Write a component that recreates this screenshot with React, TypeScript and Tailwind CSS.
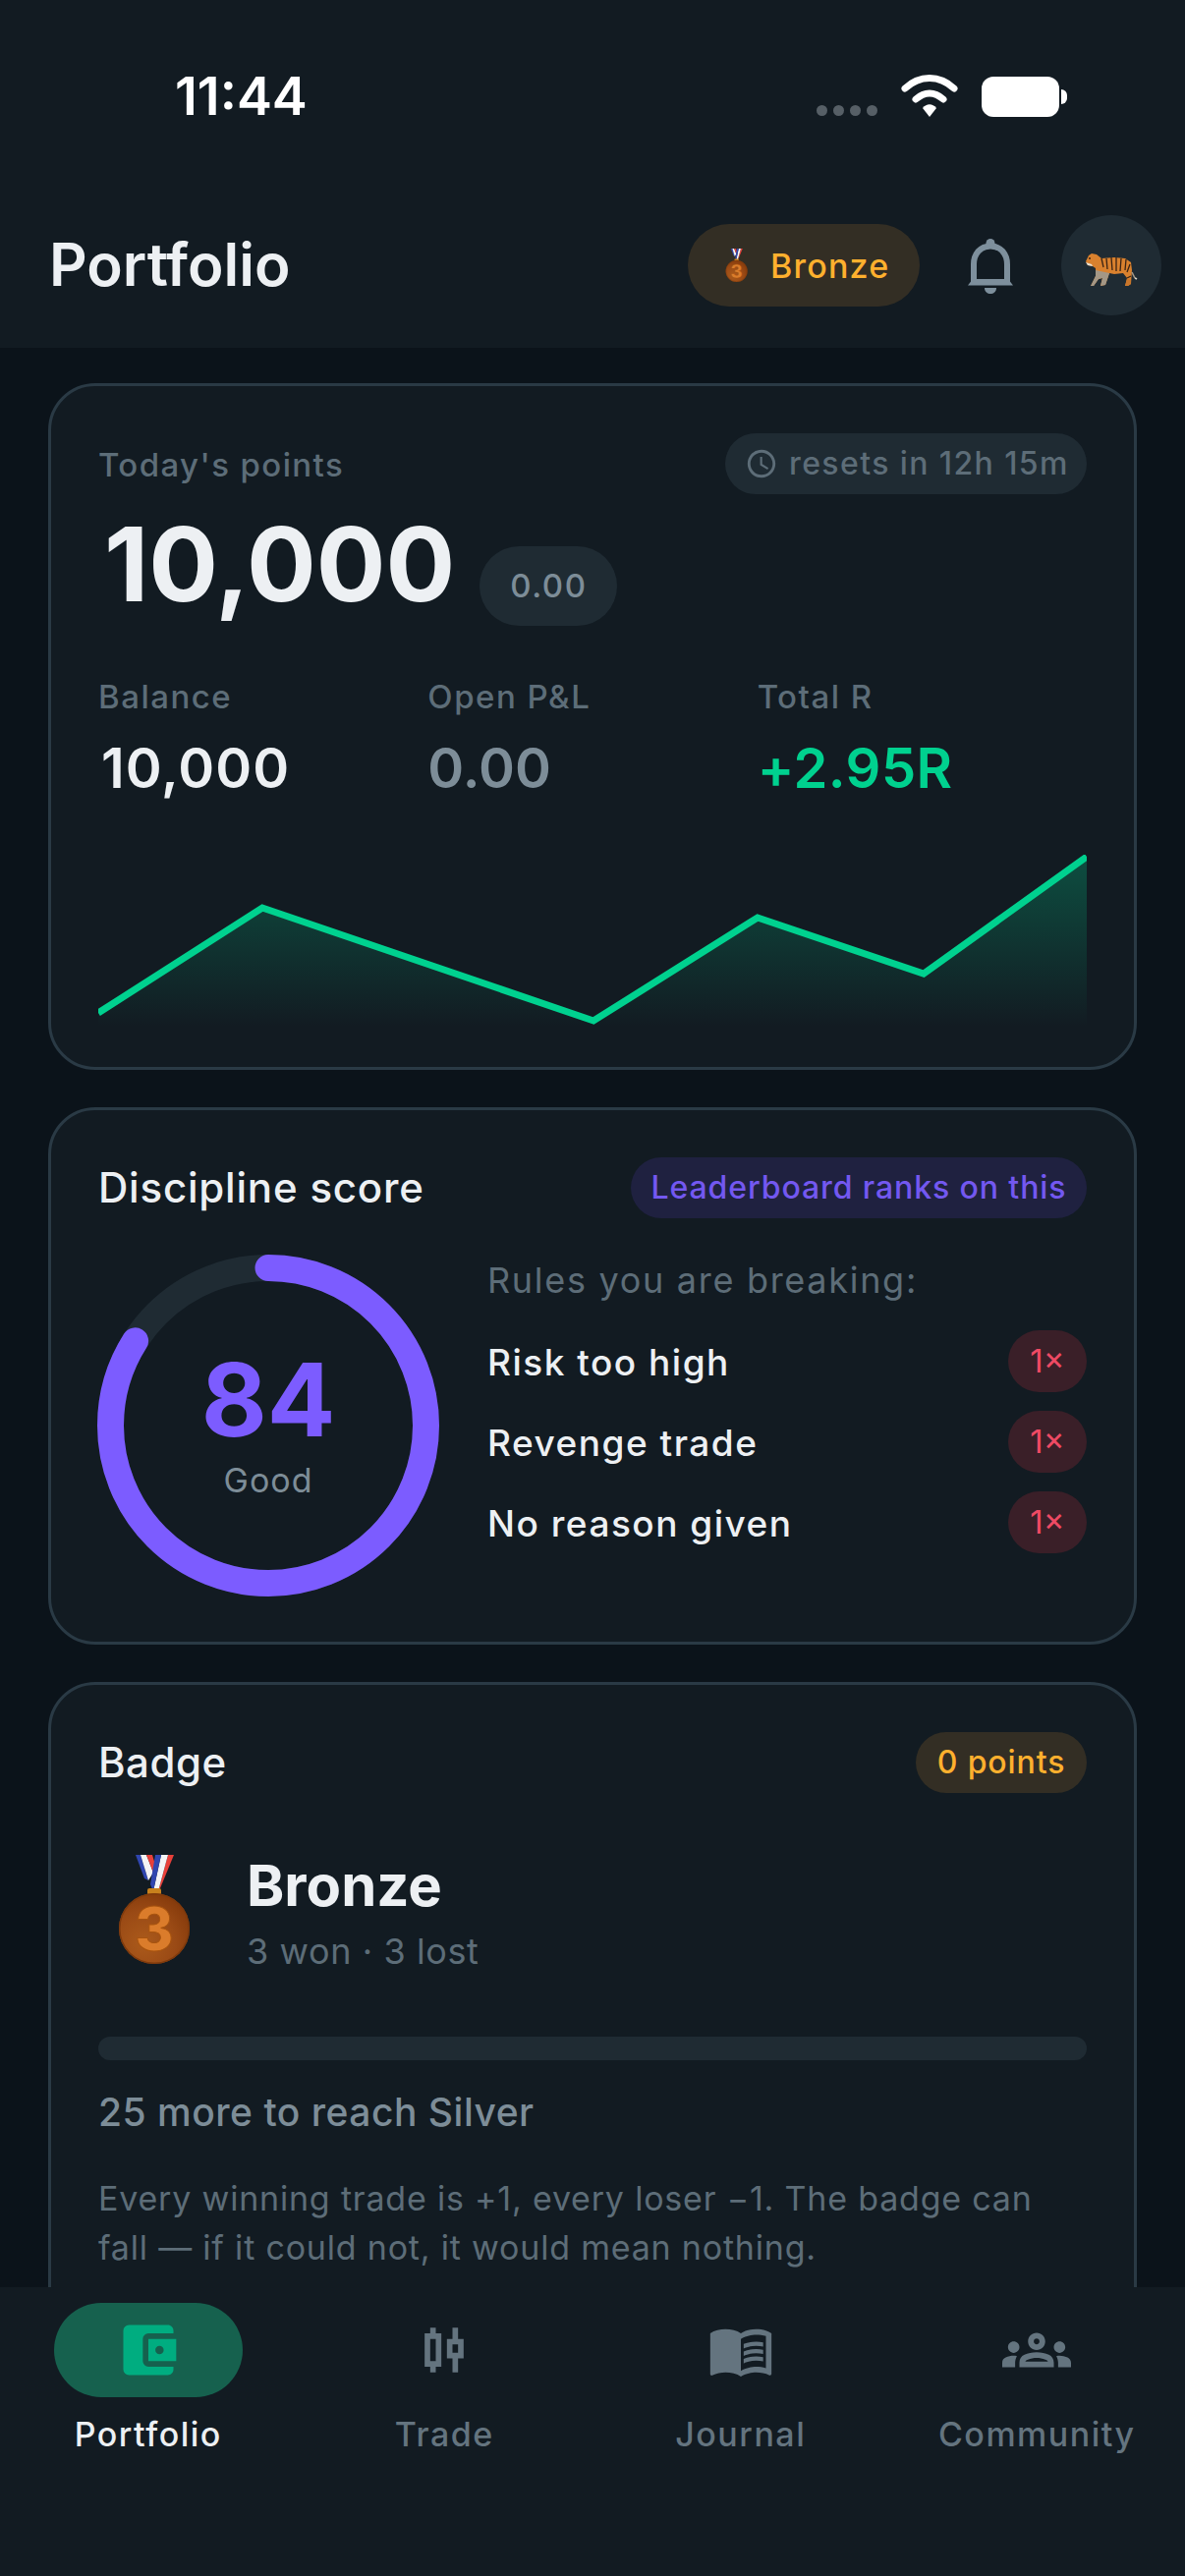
import { MdAccountBalanceWallet, MdMenuBook, MdOutlineCandlestickChart, MdOutlineGroups, MdOutlineSchedule } from "react-icons/md";

function Medal({ className, id }: { className: string; id: string }) {
  return (
    <svg viewBox="0 0 73 111" className={className}>
      <defs>
        <radialGradient id={id} cx="35%" cy="70%" r="75%">
          <stop offset="0%" stopColor="#ab5a1b" />
          <stop offset="60%" stopColor="#9a4a15" />
          <stop offset="100%" stopColor="#853a0b" />
        </radialGradient>
      </defs>
      <path d="M18 0H23L31 26L27 24Z" fill="#3046b0" />
      <path d="M23 0H29L36 18L31 26Z" fill="#f4f4f6" />
      <path d="M29 0H35L38 10L36 18Z" fill="#e8403a" />
      <path d="M51 0H57L43 34L41 37Z" fill="#e8403a" />
      <path d="M44 0H51L41 37H36Z" fill="#f4f4f6" />
      <path d="M38 0H44L36 37L33 30Z" fill="#3046b0" />
      <rect x="30" y="34" width="14" height="7" rx="2" fill="#c8811d" />
      <circle cx="37" cy="75" r="36" fill={`url(#${id})`} />
      <circle cx="37" cy="75" r="35.25" fill="none" stroke="#7f3a0c" strokeWidth="1.5" />
      <text x="37" y="97" textAnchor="middle" fontFamily="Inter, sans-serif" fontWeight="800" fontSize="60" fill="#db7c2b" stroke="#a8540f" strokeWidth="1">3</text>
    </svg>
  );
}

function Tiger() {
  return (
    <svg viewBox="0 0 54 36" className="h-[36px] w-[54px]">
      <path d="M1 9L4 3L7 1L12 2L17 6L30 5L41 6L47 10L48 18L47 32L44 34L41 34L43 26L39 21L30 22L25 21L21 33L16 34L18 26L14 27L9 34L6 34L11 24L11 16L8 14L3 13Z" fill="#d9812e" />
      <path d="M11 18L25 21L21 33L16 34L18 26L14 27L9 34L6 34L11 24Z" fill="#a39786" />
      <path d="M41 34L43 27L47 28L47 32L44 34Z" fill="#c9762b" />
      <path d="M1 10L7 12L8 14L3 13Z" fill="#e6e0d3" />
      <path d="M17 6L19 15M22 6L23 17M27 5L28 18M32 5L32 19M37 6L36 19M42 7L41 18M46 12L43 20M47 24L43 26" stroke="#3a2314" strokeWidth="1.3" fill="none" />
      <path d="M48 20L51 26" stroke="#a39786" strokeWidth="1.6" fill="none" />
      <path d="M51 26L53 27" stroke="#d8d2c4" strokeWidth="1.6" fill="none" />
      <circle cx="5" cy="6" r="0.9" fill="#2a1a10" />
    </svg>
  );
}

function Bell() {
  return (
    <svg viewBox="0 0 46 56" className="h-[56px] w-[46px]">
      <circle cx="23" cy="4.5" r="4.5" fill="#7d8f9c" />
      <path d="M6 44V26C6 15 13 7.5 23 7.5C33 7.5 40 15 40 26V44" fill="none" stroke="#7d8f9c" strokeWidth="6" />
      <path d="M0 47.5L5 41H41L46 47.5Z" fill="#7d8f9c" />
      <path d="M17 50H29C29 54 26 56 23 56C20 56 17 54 17 50Z" fill="#7d8f9c" />
    </svg>
  );
}

function Stat({ label, value, color }: { label: string; value: string; color: string }) {
  return (
    <div className="flex flex-col gap-[21px]">
      <div className="text-[33px] leading-[40px] font-medium tracking-[1.5px] text-[#5d6d78]">{label}</div>
      <div className={"text-[56px] leading-[64px] font-semibold " + color}>{value}</div>
    </div>
  );
}

function Rule({ text }: { text: string }) {
  return (
    <div className="flex h-[63px] items-center justify-between">
      <span className="pt-[2px] text-[37px] font-medium tracking-[1.5px] text-[#edf0f3]">{text}</span>
      <span className="flex h-[63px] w-[80px] items-center justify-center rounded-full bg-[#3a1f28] text-[33px] text-[#ee4a64]">1×</span>
    </div>
  );
}

function Tab({ label, icon, active }: { label: string; icon: React.ReactNode; active?: boolean }) {
  return (
    <div className="flex flex-col items-center">
      <div className={"flex h-[96px] w-[192px] items-center justify-center rounded-full " + (active ? "bg-[#16614e] text-[#00ad80]" : "text-[#64747f]")}>{icon}</div>
      <div className={"mt-[17px] text-[34px] leading-[42px] font-medium tracking-[1.5px] " + (active ? "text-[#edf0f3]" : "text-[#64747f]")}>{label}</div>
    </div>
  );
}

export default function App() {
  return (
    <div className="flex h-[2622px] w-[1206px] flex-col overflow-hidden bg-[#0b131a] font-['Inter',sans-serif]">
      <header className="h-[354px] shrink-0 bg-[#121b22]">
        <div className="flex h-[219px] items-start pl-[178px] pr-[120px]">
          <div className="mt-[66px] text-[54px] leading-[64px] font-semibold text-white">11:44</div>
          <div className="ml-auto mt-[76px] flex items-end">
            <div className="mb-[1px] flex gap-[6px]">
              <i className="h-[11px] w-[11px] rounded-full bg-[#565f66]" />
              <i className="h-[11px] w-[11px] rounded-full bg-[#565f66]" />
              <i className="h-[11px] w-[11px] rounded-full bg-[#565f66]" />
              <i className="h-[11px] w-[11px] rounded-full bg-[#565f66]" />
            </div>
            <svg viewBox="0 0 58 43" className="ml-[24px] h-[43px] w-[58px]">
              <path d="M4 14C19 0 39 0 54 14" fill="none" stroke="#fff" strokeWidth="7" strokeLinecap="round" />
              <path d="M15 25C24 17 34 17 43 25" fill="none" stroke="#fff" strokeWidth="7" strokeLinecap="round" />
              <path d="M22 34C26 29 32 29 36 34L29 43Z" fill="#fff" />
            </svg>
            <div className="ml-[24px] h-[41px] w-[79px] rounded-[12px] bg-white" />
            <div className="mb-[13px] ml-[2px] h-[15px] w-[6px] rounded-r-full bg-white" />
          </div>
        </div>
        <div className="flex h-[102px] items-center pl-[50px] pr-[24px]">
          <h1 className="mt-[-2px] text-[60px] font-semibold text-[#edf0f3]">Portfolio</h1>
          <div className="ml-auto flex h-[84px] w-[236px] items-center rounded-full bg-[#332e24] pl-[38px]">
            <Medal id="medalSmall" className="h-[34px] w-[23px]" />
            <span className="ml-[23px] text-[34px] font-medium tracking-[1.2px] text-[#ffb02e]">Bronze</span>
          </div>
          <div className="ml-[49px] mt-[2px] flex h-[56px] w-[46px]"><Bell /></div>
          <div className="ml-[49px] flex h-[102px] w-[102px] items-center justify-center rounded-full bg-[#1f2b33] pt-[10px]"><Tiger /></div>
        </div>
      </header>

      <main className="flex min-h-0 flex-1 flex-col gap-[38px] overflow-hidden px-[49px] pt-[36px]">
        <section className="h-[699px] shrink-0 rounded-[48px] border-[3px] border-[#2a3a45] bg-[#121b22] px-[48px] pt-[48px]">
          <div className="flex items-center justify-between">
            <div className="pt-[3px] text-[33px] font-medium tracking-[1.4px] text-[#5d6d78]">Today's points</div>
            <div className="flex h-[62px] w-[368px] items-center gap-[11px] rounded-full bg-[#1f2b33] pl-[20px] text-[32px] font-medium tracking-[1.4px] text-[#5d6d78]">
              <MdOutlineSchedule className="h-[34px] w-[34px]" />
              <span>resets in 12h 15m</span>
            </div>
          </div>
          <div className="mt-[9px] flex items-end">
            <div className="pl-[6px] text-[105px] leading-[124px] font-bold text-[#edf0f3]">10,000</div>
            <div className="mb-[-1px] ml-[25px] flex h-[81px] w-[140px] items-center justify-center rounded-full bg-[#1f2b33] text-[33px] font-medium tracking-[1.5px] text-[#7d8d98]">0.00</div>
          </div>
          <div className="mt-[53px] grid grid-cols-3 gap-0">
            <Stat label="Balance" value="10,000" color="pl-[3px] tracking-[1px] text-[#edf0f3]" />
            <Stat label="Open P&L" value="0.00" color="tracking-[0px] text-[#7d8d98]" />
            <Stat label="Total R" value="+2.95R" color="tracking-[0.5px] text-[#00d18f]" />
          </div>
          <svg viewBox="0 0 1006 175" className="mt-[56px] block h-[175px] w-[1006px]">
            <defs>
              <linearGradient id="spark" x1="0" y1="0" x2="0" y2="1">
                <stop offset="0%" stopColor="#00d18f" stopOpacity="0.28" />
                <stop offset="100%" stopColor="#00d18f" stopOpacity="0" />
              </linearGradient>
            </defs>
            <path d="M0 161L167 54L504 169L671 64L840 121L1006 2V175H0Z" fill="url(#spark)" />
            <path d="M0 161L167 54L504 169L671 64L840 121L1006 2" fill="none" stroke="#00d18f" strokeWidth="7" />
          </svg>
        </section>

        <section className="h-[547px] shrink-0 rounded-[48px] border-[3px] border-[#2a3a45] bg-[#121b22] px-[48px] pt-[47px]">
          <div className="flex items-center justify-between">
            <div className="text-[42px] font-medium tracking-[0.8px] text-[#edf0f3]">Discipline score</div>
            <div className="flex h-[62px] w-[464px] items-center justify-center rounded-full bg-[#1f2140] text-[32px] font-medium tracking-[0.9px] text-[#7358f0]">Leaderboard ranks on this</div>
          </div>
          <div className="mt-[37px] flex">
            <div className="relative ml-[-1px] h-[348px] w-[348px] shrink-0">
              <svg viewBox="0 0 348 348" className="h-[348px] w-[348px] -rotate-90">
                <circle cx="174" cy="174" r="160.5" fill="none" stroke="#1f2b33" strokeWidth="27" />
                <circle cx="174" cy="174" r="160.5" fill="none" stroke="#7c5cff" strokeWidth="27" strokeLinecap="round" strokeDasharray="847 1009" />
              </svg>
              <div className="absolute inset-0 flex flex-col items-center justify-center pb-[4px]">
                <div className="text-[103px] leading-[110px] font-bold text-[#7c5cff]">84</div>
                <div className="mt-[6px] text-[34px] leading-[42px] tracking-[1px] text-[#7d8d98]">Good</div>
              </div>
            </div>
            <div className="ml-[49px] flex-1">
              <div className="text-[36px] leading-[52px] tracking-[1.7px] text-[#5d6d78]">Rules you are breaking:</div>
              <div className="mt-[25px] flex flex-col gap-[19px]">
                <Rule text="Risk too high" />
                <Rule text="Revenge trade" />
                <Rule text="No reason given" />
              </div>
            </div>
          </div>
        </section>

        <section className="h-[700px] shrink-0 rounded-[48px] border-[3px] border-[#2a3a45] bg-[#121b22] px-[48px] pt-[47px]">
          <div className="flex items-center justify-between">
            <div className="text-[42px] font-medium tracking-[0.5px] text-[#edf0f3]">Badge</div>
            <div className="flex h-[62px] w-[174px] items-center justify-center rounded-full bg-[#332e24] text-[32px] font-medium tracking-[0.9px] text-[#ffb02e]">0 points</div>
          </div>
          <div className="mt-[63px] flex items-start pl-[20px]">
            <Medal id="medalLarge" className="h-[111px] w-[73px]" />
            <div className="ml-[58px] mt-[-2px]">
              <div className="text-[58px] leading-[66px] font-bold text-[#edf0f3]">Bronze</div>
              <div className="mt-[12px] text-[36px] leading-[44px] tracking-[0.6px] text-[#5d6d78]">3 won · 3 lost</div>
            </div>
          </div>
          <div className="mt-[65px] h-[24px] rounded-full bg-[#1f2b33]" />
          <div className="mt-[30px] text-[39px] leading-[46px] font-medium tracking-[0.5px] text-[#7d8d98]">25 more to reach Silver</div>
          <p className="mt-[40px] pr-[30px] text-[34px] leading-[50px] tracking-[0.8px] text-[#5d6d78]">Every winning trade is +1, every loser −1. The badge can fall — if it could not, it would mean nothing.</p>
        </section>
      </main>

      <nav className="grid h-[294px] shrink-0 grid-cols-4 bg-[#121b22] pt-[16px]">
        <Tab label="Portfolio" active icon={<MdAccountBalanceWallet className="h-[68px] w-[68px]" />} />
        <Tab label="Trade" icon={<MdOutlineCandlestickChart className="h-[68px] w-[68px]" />} />
        <Tab label="Journal" icon={<MdMenuBook className="h-[68px] w-[68px]" />} />
        <Tab label="Community" icon={<MdOutlineGroups className="h-[70px] w-[70px]" />} />
      </nav>
    </div>
  );
}
